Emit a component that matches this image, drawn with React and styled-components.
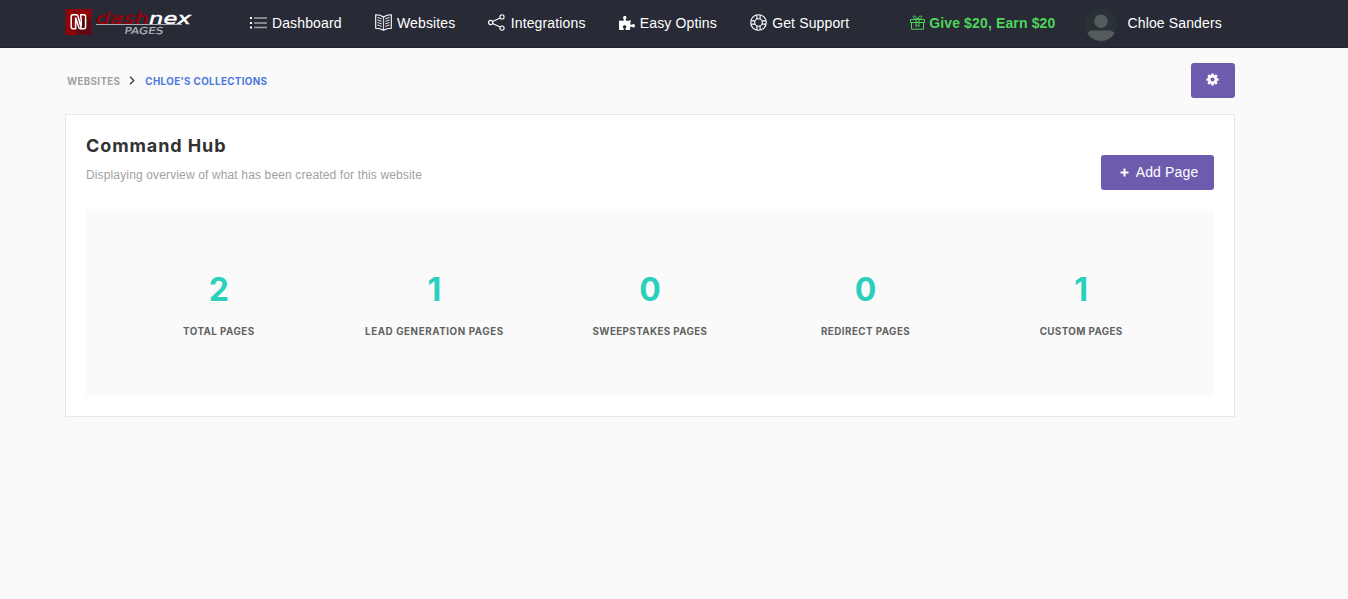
import React from 'react';
import styled, { createGlobalStyle } from 'styled-components';
import { FaPuzzlePiece } from 'react-icons/fa';

const stats = [
  { label: 'Total Pages', value: 2, tracking: 0.45 },
  { label: 'Lead Generation Pages', value: 1, tracking: 0.57 },
  { label: 'Sweepstakes Pages', value: 0, tracking: 0.4 },
  { label: 'Redirect Pages', value: 0, tracking: 0.45 },
  { label: 'Custom Pages', value: 1, tracking: 0.4 },
];

const LogoMark = () => (
  <svg width="128" height="30" viewBox="0 0 128 30">
    <rect x="0.5" y="1" width="26" height="26" fill="#8f0408" />
    <path d="M8 21.5 L13.5 27 H26.5 V13 L20.5 7 Z" fill="#5e0a10" />
    <path
      d="M10.6 17.5 V9.6 M10.6 17.5 V20.7 H8 Q6.2 20.7 6.2 19 V8.5 Q6.2 6.8 8 6.8 H11.3 Q12.5 6.8 13 8 L16.2 20 M15.8 10.5 V6.8 H18.8 Q20.6 6.8 20.6 8.5 V19 Q20.6 20.7 18.8 20.7 H15.5 Q14.3 20.7 13.8 19.5 L10.6 9.6 M16.2 18 V10"
      fill="none"
      stroke="#fff"
      strokeWidth="1.5"
    />
    <text
      x="31"
      y="15.5"
      fill="#960008"
      stroke="#960008"
      strokeWidth="0.5"
      fontFamily="DejaVu Sans"
      fontSize="16.5"
      fontStyle="italic"
      textLength="53"
      lengthAdjust="spacingAndGlyphs"
    >
      dash
    </text>
    <text
      x="84"
      y="15.5"
      fill="#fff"
      stroke="#fff"
      strokeWidth="0.5"
      fontFamily="DejaVu Sans"
      fontSize="16.5"
      fontStyle="italic"
      textLength="42"
      lengthAdjust="spacingAndGlyphs"
    >
      nex
    </text>
    <path d="M31 16.5 H117" stroke="#a9a9ae" strokeWidth="1" />
    <text
      x="59"
      y="26"
      fill="#b3b5ba"
      stroke="#b3b5ba"
      strokeWidth="0.2"
      fontFamily="DejaVu Sans"
      fontSize="9.5"
      textLength="39"
      lengthAdjust="spacingAndGlyphs"
      transform="translate(4.6 0) skewX(-10)"
    >
      PAGES
    </text>
  </svg>
);

const ListIcon = () => (
  <svg width="17" height="17" viewBox="0 0 17 17" fill="none">
    <path d="M0 4 H2 M0 9 H2 M0 13.5 H2" stroke="#fff" strokeWidth="1.8" />
    <path d="M4 4 H17 M4 9 H17 M4 13.5 H17" stroke="#a3a5a9" strokeWidth="1.6" />
  </svg>
);

const BookIcon = () => (
  <svg width="17" height="17" viewBox="0 0 17 17" fill="none" stroke="#fff">
    <path d="M8.5 3 C6 1.2 3 .8 .7 .8 V14.2 C3 14.2 6 14.6 8.5 16.3 C11 14.6 14 14.2 16.3 14.2 V.8 C14 .8 11 1.2 8.5 3 Z" strokeWidth="1.1" />
    <path d="M8.5 3 V16" strokeWidth="1.2" opacity=".8" />
    <path
      d="M2.5 3.5 L6.7 4.8 M2.5 6 L6.7 7.3 M2.5 8.5 L6.7 9.8 M2.5 11 L6.7 12.3 M14.5 3.5 L10.3 4.8 M14.5 6 L10.3 7.3 M14.5 8.5 L10.3 9.8 M14.5 11 L10.3 12.3"
      strokeWidth=".9"
    />
  </svg>
);

const ShareIcon = () => (
  <svg width="17" height="17" viewBox="0 0 17 17" fill="none" stroke="#fff" strokeWidth="1.1">
    <circle cx="2.7" cy="8.5" r="2.1" />
    <circle cx="14" cy="2.9" r="2.1" />
    <circle cx="14" cy="14.1" r="2.1" />
    <path d="M4.6 7.6 L12.1 3.9 M4.6 9.4 L12.1 13.1" />
  </svg>
);

const SupportIcon = () => (
  <svg width="17" height="17" viewBox="0 0 17 17" fill="none" stroke="#fff" strokeWidth="1.1">
    <circle cx="8.5" cy="8.5" r="7.8" />
    <circle cx="8.5" cy="8.5" r="3.8" />
    <path d="M6.9 .9 V5 M10.1 .9 V5 M6.9 12 V16.1 M10.1 12 V16.1 M.9 6.9 H5 M.9 10.1 H5 M12 6.9 H16.1 M12 10.1 H16.1" />
  </svg>
);

const GiftIcon = () => (
  <svg width="15" height="15" viewBox="0 0 15 15" fill="none" stroke="#4fd45a" strokeWidth="1">
    <path d="M.5 4.5 H14.5 V7.5 H.5 Z M1.5 7.5 V14.2 H13.5 V7.5" />
    <path d="M6 4.5 V11.5 L7.5 10.3 L9 11.5 V4.5" />
    <path d="M7.5 4 C6.5 1.5 4 .2 3.3 1.4 C2.6 2.8 5 4 7.5 4 C10 4 12.4 2.8 11.7 1.4 C11 .2 8.5 1.5 7.5 4 Z" />
  </svg>
);

const GearIcon = () => (
  <svg width="13" height="13" viewBox="0 0 13 13" fill="none" stroke="#fff">
    <circle cx="6.5" cy="6.5" r="3.4" strokeWidth="2.7" />
    <path
      d="M6.5 .4 V2.2 M6.5 10.8 V12.6 M.4 6.5 H2.2 M10.8 6.5 H12.6 M2.2 2.2 L3.5 3.5 M9.5 9.5 L10.8 10.8 M2.2 10.8 L3.5 9.5 M9.5 3.5 L10.8 2.2"
      strokeWidth="2.5"
    />
  </svg>
);

const UserAvatar = () => (
  <svg width="32" height="32" viewBox="0 0 32 32">
    <defs>
      <clipPath id="avatar">
        <circle cx="16" cy="16" r="16" />
      </clipPath>
    </defs>
    <g clipPath="url(#avatar)">
      <rect width="32" height="32" fill="#293234" />
      <circle cx="16" cy="12.3" r="6.8" fill="#545b5d" />
      <path d="M2 32 V26 C2 23 5 21.5 8 21.5 H24 C27 21.5 30 23 30 26 V32 Z" fill="#545b5d" />
    </g>
  </svg>
);

const App = () => {
  return (
    <>
      <GlobalStyle />
      <Header>
        <Brand>
          <LogoMark />
        </Brand>
        <Nav>
          <NavItem><ListIcon />Dashboard</NavItem>
          <NavItem><BookIcon />Websites</NavItem>
          <NavItem><ShareIcon />Integrations</NavItem>
          <NavItem><FaPuzzlePiece size={16} />Easy Optins</NavItem>
          <NavItem><SupportIcon />Get Support</NavItem>
        </Nav>
        <Promo><GiftIcon />Give $20, Earn $20</Promo>
        <User><UserAvatar />Chloe Sanders</User>
      </Header>

      <Main>
        <TopRow>
          <Breadcrumb>
            <Crumb>Websites</Crumb>
            <Chevron viewBox="0 0 6 9"><path d="M1 .8 L4.8 4.5 L1 8.2" /></Chevron>
            <Crumb $active>Chloe's Collections</Crumb>
          </Breadcrumb>
          <SettingsButton aria-label="Settings"><GearIcon /></SettingsButton>
        </TopRow>

        <Card>
          <CardHeader>
            <div>
              <Title>Command Hub</Title>
              <Subtitle>Displaying overview of what has been created for this website</Subtitle>
            </div>
            <AddButton>
              <svg width="9" height="9" viewBox="0 0 9 9">
                <path d="M4.5 .5 V8.5 M.5 4.5 H8.5" stroke="#fff" strokeWidth="2" />
              </svg>
              Add Page
            </AddButton>
          </CardHeader>
          <Stats>
            {stats.map((stat) => (
              <Stat key={stat.label}>
                <StatValue>{stat.value}</StatValue>
                <StatLabel $tracking={stat.tracking}>{stat.label}</StatLabel>
              </Stat>
            ))}
          </Stats>
        </Card>
      </Main>
    </>
  );
};

// Styled components
const GlobalStyle = createGlobalStyle`
  * {
    box-sizing: border-box;
  }

  body {
    margin: 0;
    background: #fafafa;
    font-family: 'Liberation Sans', Arial, sans-serif;
    font-size: 14px;
    letter-spacing: 0.01em;
  }
`;

const Header = styled.header`
  display: flex;
  align-items: center;
  height: 48px;
  padding: 0 65px 2px;
  background: #282b36;
  border-bottom: 1px solid #20222c;
  color: #fff;
  white-space: nowrap;
`;

const Brand = styled.div`
  display: flex;
  width: 184.6px;
`;

const Nav = styled.nav`
  display: flex;
  gap: 33px;
`;

const NavItem = styled.a`
  display: flex;
  align-items: center;
  gap: 5.3px;
`;

const Promo = styled.a`
  display: flex;
  align-items: center;
  gap: 4px;
  margin-left: 61px;
  color: #4fd45a;
  font-weight: 700;
`;

const User = styled.div`
  display: flex;
  align-items: center;
  gap: 10px;
  margin-left: 30px;

  svg {
    margin-top: 4px;
  }
`;

const Main = styled.main`
  width: 1170px;
  margin-left: 65px;
`;

const TopRow = styled.div`
  display: flex;
  align-items: center;
  justify-content: space-between;
  height: 66px;
`;

const Breadcrumb = styled.div`
  display: flex;
  align-items: center;
  padding-left: 2px;
`;

const Crumb = styled.span`
  color: ${(props) => (props.$active ? '#4a78e0' : '#a0a1a6')};
  font-family: Inter, sans-serif;
  font-size: 9.8px;
  font-weight: 700;
  letter-spacing: ${(props) => (props.$active ? '0.36px' : '0.33px')};
  text-transform: uppercase;
`;

const Chevron = styled.svg`
  width: 6px;
  height: 9px;
  margin: 0 10.5px 2px 8.5px;
  fill: none;
  stroke: #3a3a3a;
  stroke-width: 1.3;
`;

const Button = styled.button`
  display: flex;
  align-items: center;
  justify-content: center;
  height: 35px;
  border: 0;
  border-radius: 3px;
  background: #6d5cae;
  color: #fff;
  font: inherit;
  letter-spacing: inherit;
`;

const SettingsButton = styled(Button)`
  width: 44px;
  margin-bottom: 2px;
  padding: 0 7px 1px 6px;
`;

const AddButton = styled(Button)`
  gap: 7px;
  width: 113px;
  margin-top: 20px;
  padding: 0 0 2px 3px;

  svg {
    margin-top: 1px;
  }
`;

const Card = styled.section`
  height: 303px;
  padding: 20px;
  background: #fff;
  border: 1px solid #e8e8e8;
`;

const CardHeader = styled.div`
  display: flex;
  justify-content: space-between;
  height: 76px;
`;

const Title = styled.h1`
  margin: 0;
  color: #323232;
  font-family: Inter, sans-serif;
  font-size: 18px;
  font-weight: 700;
  line-height: 22px;
  letter-spacing: 0.9px;
`;

const Subtitle = styled.p`
  margin: 10px 0 0;
  color: #a0a1a5;
  font-size: 12px;
  line-height: 16px;
  letter-spacing: 0.14px;
`;

const Stats = styled.div`
  display: flex;
  height: 185px;
  padding: 60px 25px 0;
  background: #fafafa;
`;

const Stat = styled.div`
  flex: 1;
  text-align: center;
`;

const StatValue = styled.div`
  color: #2bd0bd;
  font-family: Inter, sans-serif;
  font-size: 32px;
  font-weight: 700;
  line-height: 37px;
`;

const StatLabel = styled.div`
  margin-top: 17px;
  color: #626262;
  font-family: Inter, sans-serif;
  font-size: 9.8px;
  font-weight: 700;
  line-height: 14px;
  letter-spacing: ${(props) => props.$tracking}px;
  text-transform: uppercase;
  white-space: nowrap;
`;

export default App;
